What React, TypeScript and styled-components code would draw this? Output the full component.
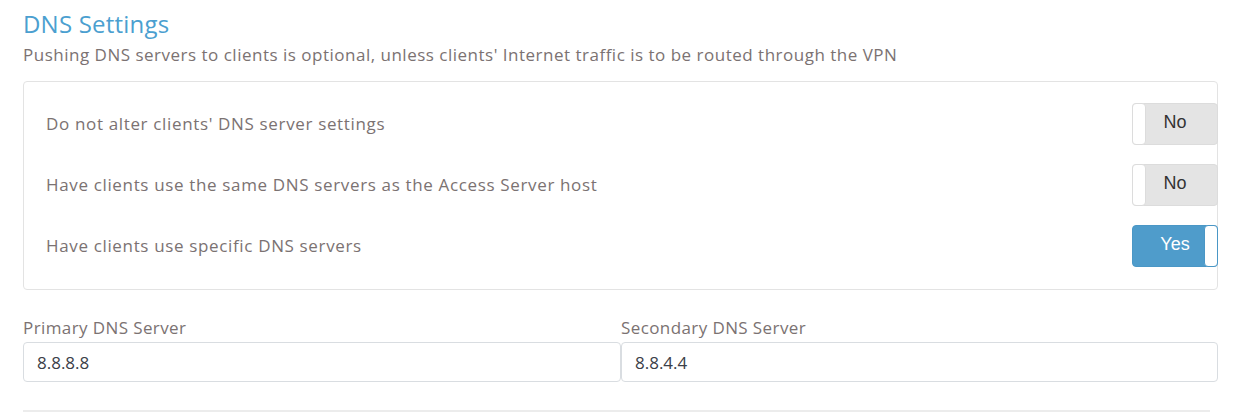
import styled, { createGlobalStyle } from 'styled-components';

const Global = createGlobalStyle`
  body {
    margin: 0;
    background: #fff;
    font-family: 'Open Sans', 'Noto Sans', sans-serif;
  }
`;

const Page = styled.div`
  width: 1195px;
  padding: 8px 0 0 23px;
`;

const Title = styled.h2`
  margin: 0;
  font-size: 24px;
  line-height: 32px;
  font-weight: 400;
  letter-spacing: 0.2px;
  color: #4b9fd0;
`;

const Subtitle = styled.p`
  margin: 2px 0 0;
  font-size: 17px;
  line-height: 26px;
  letter-spacing: 0.5px;
  color: #7b7272;
`;

const OptionsBox = styled.div`
  margin-top: 13px;
  border: 1px solid #e3e3e3;
  border-radius: 4px;
  padding: 21px 0 22px 22px;
  display: flex;
  flex-direction: column;
  gap: 19px;
`;

const Row = styled.div`
  display: flex;
  align-items: center;
  justify-content: space-between;
  height: 42px;
`;

const Label = styled.span`
  font-size: 17px;
  letter-spacing: 0.65px;
  color: #7b7272;
  margin-top: -2px;
`;

const Toggle = styled.div<{ on: boolean }>`
  position: relative;
  width: 86px;
  height: 42px;
  box-sizing: border-box;
  margin-right: -1px;
  border-radius: 4px;
  border: 1px solid ${(p) => (p.on ? '#4a97c6' : '#dcdcdc')};
  background: ${(p) => (p.on ? '#4f9ccb' : '#e4e4e4')};
  color: ${(p) => (p.on ? '#fff' : '#333')};
  font-family: 'Liberation Sans', Arial, sans-serif;
  font-size: 18px;
  display: flex;
  align-items: center;
  justify-content: center;
  padding-bottom: 3px;
`;

const Handle = styled.span<{ on: boolean }>`
  position: absolute;
  top: -1px;
  bottom: -1px;
  ${(p) => (p.on ? 'right: -1px;' : 'left: -1px;')}
  width: 14px;
  box-sizing: border-box;
  background: #fff;
  border: 1px solid ${(p) => (p.on ? '#4a97c6' : '#dcdcdc')};
  border-radius: 4px;
`;

const Fields = styled.div`
  margin-top: 28px;
  display: grid;
  grid-template-columns: 598px 597px;
`;

const Field = styled.div`
  display: flex;
  flex-direction: column;
`;

const FieldLabel = styled.label`
  font-size: 17px;
  line-height: 20px;
  letter-spacing: 0.4px;
  color: #7b7272;
  margin-bottom: 4px;
`;

const Input = styled.input`
  height: 40px;
  box-sizing: border-box;
  border: 1px solid #d9dde1;
  border-radius: 4px;
  padding: 0 13px;
  font-family: 'Open Sans', 'Noto Sans', sans-serif;
  font-size: 17px;
  color: #3b4048;
  outline: none;
`;

const Divider = styled.div`
  margin-top: 28px;
  width: 1187px;
  height: 2px;
  background: #ececec;
`;

const options = [
  { label: "Do not alter clients' DNS server settings", on: false },
  { label: 'Have clients use the same DNS servers as the Access Server host', on: false },
  { label: 'Have clients use specific DNS servers', on: true },
];

const App = () => {
  return (
    <>
      <Global />
      <Page>
        <Title>DNS Settings</Title>
        <Subtitle>
          Pushing DNS servers to clients is optional, unless clients' Internet traffic is to be routed through the VPN
        </Subtitle>
        <OptionsBox>
          {options.map((o) => (
            <Row key={o.label}>
              <Label>{o.label}</Label>
              <Toggle on={o.on}>
                {o.on ? 'Yes' : 'No'}
                <Handle on={o.on} />
              </Toggle>
            </Row>
          ))}
        </OptionsBox>
        <Fields>
          <Field>
            <FieldLabel>Primary DNS Server</FieldLabel>
            <Input defaultValue="8.8.8.8" />
          </Field>
          <Field>
            <FieldLabel>Secondary DNS Server</FieldLabel>
            <Input defaultValue="8.8.4.4" />
          </Field>
        </Fields>
        <Divider />
      </Page>
    </>
  );
};

export default App;
